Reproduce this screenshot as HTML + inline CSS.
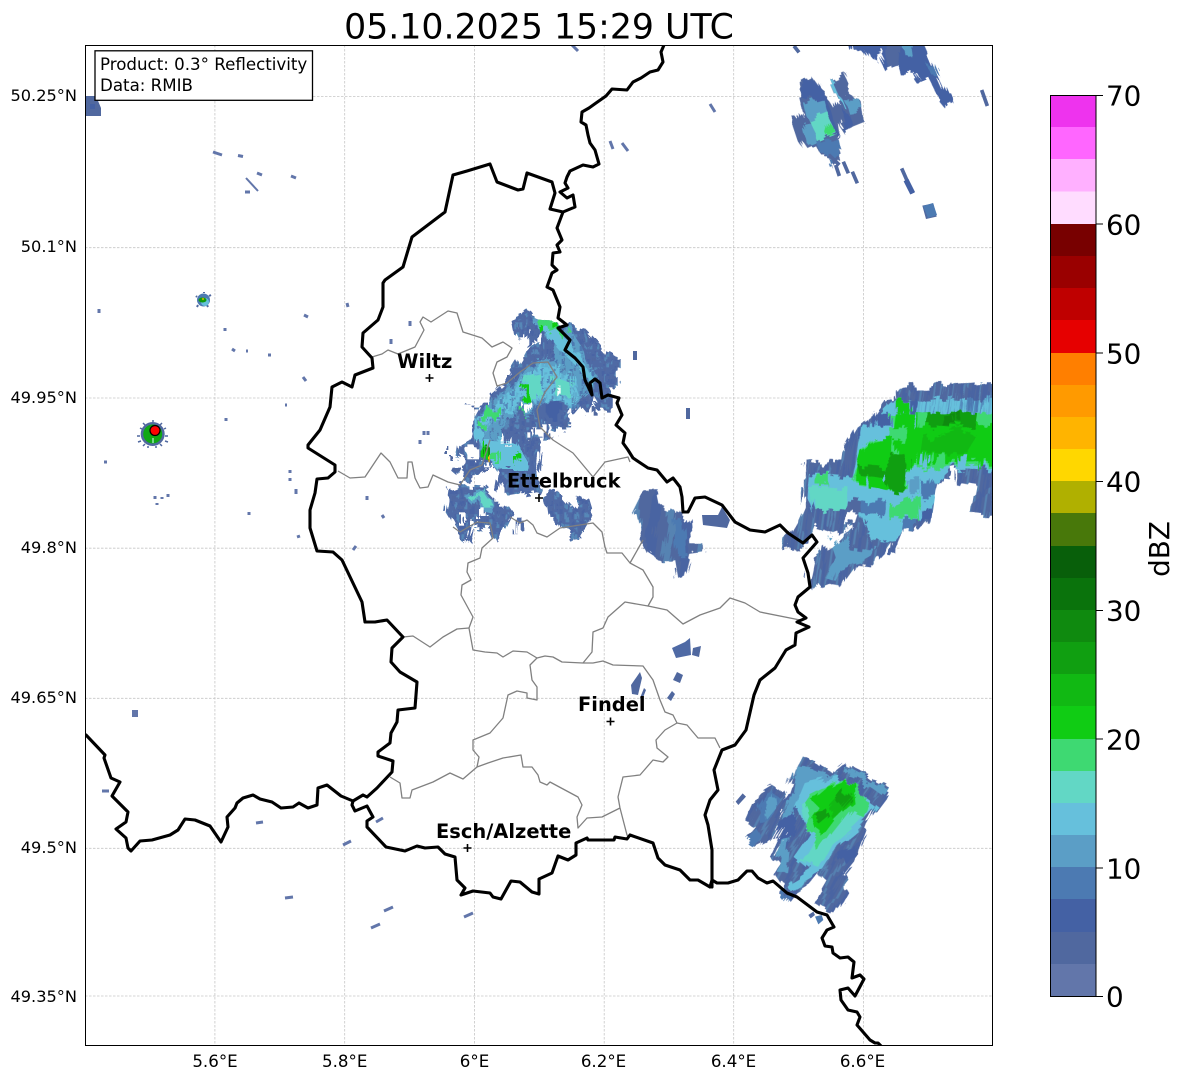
<!DOCTYPE html>
<html><head><meta charset="utf-8"><style>
html,body{margin:0;padding:0;background:#fff}
svg{display:block}
text{font-family:"DejaVu Sans",sans-serif;fill:#000}
</style></head><body>
<svg width="1184" height="1081" viewBox="0 0 1184 1081" xmlns="http://www.w3.org/2000/svg">
<defs>
<clipPath id="ax"><rect x="85.5" y="45.5" width="907" height="1000"/></clipPath>
<pattern id="st2" width="34" height="60" patternUnits="userSpaceOnUse" patternTransform="rotate(8)">
<rect x="2" width="9" height="60" fill="#4461a4" opacity=".55"/><rect x="20" width="6" height="60" fill="#5b9ec6" opacity=".5"/></pattern>
<pattern id="st3" width="36" height="60" patternUnits="userSpaceOnUse" patternTransform="rotate(28)">
<rect x="4" width="10" height="60" fill="#4461a4" opacity=".55"/><rect x="22" width="7" height="60" fill="#5b9ec6" opacity=".45"/></pattern>
<pattern id="st4" width="30" height="30" patternUnits="userSpaceOnUse">
<rect x="2" y="0" width="9" height="15" fill="#4461a4" opacity=".6"/><rect x="16" y="10" width="9" height="15" fill="#5b9ec6" opacity=".55"/><rect x="8" y="20" width="6" height="10" fill="#50689f" opacity=".6"/></pattern>
<filter id="fE" x="-15%" y="-15%" width="130%" height="130%" color-interpolation-filters="sRGB">
<feTurbulence type="fractalNoise" baseFrequency="0.13 0.035" numOctaves="1" seed="3"/>
<feComponentTransfer result="d"><feFuncR type="discrete" tableValues="0 .15 .3 .45 .55 .7 .85 1"/><feFuncG type="discrete" tableValues="0 .15 .3 .45 .55 .7 .85 1"/><feFuncA type="discrete" tableValues="1"/></feComponentTransfer>
<feDisplacementMap in="SourceGraphic" in2="d" scale="20" xChannelSelector="R" yChannelSelector="G"/>
</filter>
<filter id="fC" x="-15%" y="-15%" width="130%" height="130%" color-interpolation-filters="sRGB">
<feTurbulence type="fractalNoise" baseFrequency="0.12 0.07" numOctaves="1" seed="8"/>
<feComponentTransfer result="d"><feFuncR type="discrete" tableValues="0 .15 .3 .45 .55 .7 .85 1"/><feFuncG type="discrete" tableValues="0 .15 .3 .45 .55 .7 .85 1"/><feFuncA type="discrete" tableValues="1"/></feComponentTransfer>
<feDisplacementMap in="SourceGraphic" in2="d" scale="20" xChannelSelector="R" yChannelSelector="G"/>
</filter>
<filter id="fS" x="-20%" y="-20%" width="140%" height="140%" color-interpolation-filters="sRGB">
<feTurbulence type="fractalNoise" baseFrequency="0.13 0.04" numOctaves="1" seed="5"/>
<feComponentTransfer result="d"><feFuncR type="discrete" tableValues="0 .15 .3 .45 .55 .7 .85 1"/><feFuncG type="discrete" tableValues="0 .15 .3 .45 .55 .7 .85 1"/><feFuncA type="discrete" tableValues="1"/></feComponentTransfer>
<feDisplacementMap in="SourceGraphic" in2="d" scale="16" xChannelSelector="R" yChannelSelector="G"/>
</filter>
</defs>

<text x="539" y="38.5" font-size="34.72" text-anchor="middle">05.10.2025 15:29 UTC</text>

<g clip-path="url(#ax)">
<!-- grid -->
<g stroke="#c6c6c6" stroke-width=".8" stroke-dasharray="2.5 1.5" fill="none">
<path d="M214.9,45V1046M344.7,45V1046M474.5,45V1046M604.2,45V1046M733.7,45V1046M863.4,45V1046"/>
<path d="M85,96.5H993M85,247.7H993M85,398H993M85,548.2H993M85,698.3H993M85,848.3H993M85,996H993"/>
</g>

<!-- East storm -->
<g transform="rotate(8 900 480)"><g filter="url(#fE)"><g transform="rotate(-8 900 480)">
<g transform="translate(780 370) scale(.33333)">
<polygon fill="#50689f" points="345,55 380,50 410,50 440,50 510,45 570,42 600,40 680,38 680,435 575,430 590,345 535,335 530,295 510,340 470,335 460,375 450,415 440,455 410,490 365,480 350,515 348,560 330,560 335,520 310,555 280,590 240,585 215,610 190,645 160,640 110,660 90,635 105,560 155,530 185,500 215,470 160,490 100,470 75,530 12,540 15,510 40,480 60,445 75,410 75,280 185,280 190,245 210,210 230,175 285,135 315,95 345,90"/>
<polygon fill="url(#st2)" points="345,55 380,50 410,50 440,50 510,45 570,42 600,40 680,38 680,435 575,430 590,345 535,335 530,295 510,340 470,335 460,375 450,415 440,455 410,490 365,480 350,515 348,560 330,560 335,520 310,555 280,590 240,585 215,610 190,645 160,640 110,660 90,635 105,560 155,530 185,500 215,470 160,490 100,470 75,530 12,540 15,510 40,480 60,445 75,410 75,280 185,280 190,245 210,210 230,175 285,135 315,95 345,90"/>
<polygon fill="#5b9ec6" points="145,500 185,505 215,530 285,540 275,560 240,580 190,590 170,630 140,620 165,560"/>
<polygon fill="#66c0dc" points="340,95 680,85 680,300 520,290 465,340 450,400 415,450 360,470 345,510 300,515 260,490 235,430 195,390 190,420 95,420 85,390 90,310 215,320 240,210 300,135"/>
<polygon fill="url(#st2)" points="345,95 680,85 680,135 345,135"/>
<polygon fill="#50689f" points="195,390 235,395 300,405 300,435 240,430 200,425"/>
<polygon fill="#66c0dc" points="265,440 340,450 320,515 260,490"/>
<polygon fill="#62d7c5" points="90,350 190,350 190,420 95,420"/>
<polygon fill="#3ed972" points="335,135 680,130 680,280 490,290 385,300 380,360 230,350 215,320 230,290 240,245 280,210 340,175"/>
<polygon fill="#3ed972" points="340,405 410,380 415,450 340,440"/>
<polygon fill="#3ed972" points="115,315 140,315 140,345 115,345"/>
<polygon fill="#10cc14" points="350,95 385,95 385,130 350,130"/>
<polygon fill="#10cc14" points="340,170 345,130 400,130 440,130 560,130 600,170 680,170 680,275 480,280 385,290 375,360 330,365 230,345 230,285 240,250 280,215 335,205"/>
<polygon fill="#109f11" points="440,130 580,130 585,175 530,175 480,170 440,170"/>
<polygon fill="#11b913" points="430,210 540,180 590,200 560,250 430,245"/>
<polygon fill="#109f11" points="235,285 310,290 345,250 385,250 380,325 370,365 325,360 310,320 240,315"/>
<polygon fill="#0f8a0f" points="490,135 535,135 535,170 490,170"/>
<rect x="403" y="130" width="8" height="45" fill="#66c0dc"/><rect x="415" y="130" width="30" height="40" fill="#3ed972"/><rect x="345" y="215" width="10" height="35" fill="#3ed972"/><rect x="400" y="250" width="8" height="40" fill="#3ed972"/><rect x="425" y="250" width="14" height="40" fill="#66c0dc"/><rect x="450" y="250" width="8" height="40" fill="#3ed972"/><rect x="475" y="250" width="18" height="38" fill="#3ed972"/><rect x="530" y="255" width="30" height="42" fill="#66c0dc"/><rect x="598" y="250" width="8" height="50" fill="#10cc14"/><rect x="620" y="130" width="60" height="40" fill="#3ed972"/><rect x="575" y="88" width="15" height="40" fill="#4c7ab2"/><rect x="388" y="90" width="22" height="40" fill="#4461a4"/><rect x="255" y="320" width="8" height="40" fill="#66c0dc"/><rect x="305" y="290" width="8" height="45" fill="#66c0dc"/><rect x="380" y="295" width="40" height="32" fill="#66c0dc"/><rect x="420" y="330" width="40" height="45" fill="#4c7ab2"/><rect x="385" y="330" width="30" height="40" fill="#5b9ec6"/><rect x="245" y="395" width="60" height="38" fill="#4c7ab2"/><rect x="425" y="410" width="20" height="40" fill="#4461a4"/><rect x="365" y="450" width="45" height="38" fill="#4c7ab2"/><rect x="290" y="130" width="45" height="40" fill="#4461a4"/><rect x="230" y="175" width="110" height="35" fill="#66c0dc"/>
<rect x="330" y="175" width="55" height="35" fill="#3ed972"/>
<rect x="230" y="175" width="12" height="35" fill="#4461a4"/>
<polygon fill="#fff" points="200,430 230,430 220,460 195,460"/>
<polygon fill="#fff" points="510,300 535,295 535,335 515,340"/>
<polygon fill="#fff" points="165,490 215,470 185,500 155,530 130,530"/>
</g></g></g></g>

<!-- SE storm -->
<g transform="rotate(37 815 835)"><g filter="url(#fS)"><g transform="rotate(-37 815 835)">
<g transform="translate(720 740) scale(.33333)">
<polygon fill="#50689f" points="245,50 270,60 345,100 380,72 510,140 495,170 465,210 445,245 415,325 410,350 370,400 385,425 365,440 380,465 345,525 330,520 280,490 315,430 295,400 270,430 220,460 205,480 170,460 190,445 160,400 175,375 150,345 175,290 150,295 110,315 80,290 105,260 75,245 115,155 155,130 185,150 195,180 225,85"/>
<polygon fill="url(#st3)" points="245,50 270,60 345,100 380,72 510,140 495,170 465,210 445,245 415,325 410,350 370,400 385,425 365,440 380,465 345,525 330,520 280,490 315,430 295,400 270,430 220,460 205,480 170,460 190,445 160,400 175,375 150,345 175,290 150,295 110,315 80,290 105,260 75,245 115,155 155,130 185,150 195,180 225,85"/>
<polygon fill="#4c7ab2" points="130,165 160,150 175,185 150,240 120,245 110,200"/>
<polygon fill="#5b9ec6" points="130,190 160,170 165,205 140,235"/>
<polygon fill="#4c7ab2" points="80,300 110,270 120,290 105,315"/>
<polygon fill="#4c7ab2" points="170,450 190,445 208,470 195,483"/>
<polygon fill="#5b9ec6" points="225,85 285,90 345,110 300,150 225,190 200,400 170,400"/>
<polygon fill="#66c0dc" points="250,130 345,110 470,200 410,270 350,320 310,385 280,395 225,350 265,290 255,260 225,190"/>
<polygon fill="#66c0dc" points="300,370 300,395 215,445 205,425"/>
<polygon fill="#62d7c5" points="240,185 330,130 400,140 455,205 400,260 330,320 295,385 245,360 285,290 250,240"/>
<polygon fill="#5b9ec6" points="380,80 505,145 490,165 440,130 385,105"/>
<polygon fill="#3ed972" points="260,165 330,130 370,115 410,140 450,200 440,235 395,210 340,280 300,340 290,320 285,290 255,265 270,230 250,180"/>
<polygon fill="#10cc14" points="285,170 320,140 370,120 400,135 405,180 370,210 340,240 310,280 285,265 275,235 295,205 265,175"/>
<polygon fill="#11b913" points="330,195 370,150 400,175 360,220 340,235"/>
<polygon fill="#109f11" points="350,170 370,150 395,175 370,200"/>
<polygon fill="#109f11" points="280,230 320,200 330,225 300,250"/>
<polygon fill="#4461a4" points="355,340 410,320 405,350 365,375"/>
<polygon fill="#4461a4" points="190,240 230,230 220,290 170,300"/>
<path d="M160,300L185,255M195,210L185,230M175,345L195,300M210,265L195,285" stroke="#fff" stroke-width="3"/>
<polygon fill="#fff" points="295,405 320,425 300,460 275,470 270,432"/>
</g></g></g></g>
<g transform="translate(720 740) scale(.33333)">
<polygon fill="#50689f" points="47,185 68,160 78,170 55,195"/>
<polygon fill="#4c7ab2" points="285,530 305,525 310,540 295,553"/>
<polygon fill="#50689f" points="265,525 280,515 285,525 272,535"/>
</g>

<!-- North storms -->
<g transform="rotate(-22 850 110)"><g filter="url(#fS)"><g transform="rotate(22 850 110)">
<g transform="translate(760 45) scale(.33333)">
<polygon fill="#50689f" points="115,110 155,90 180,125 205,145 230,185 240,165 225,130 215,105 260,85 275,115 265,150 300,170 310,235 285,245 255,260 235,230 240,265 222,280 235,315 240,350 225,360 205,330 185,330 170,300 135,315 115,285 90,210 110,205 125,225 135,210 120,150"/>
<polygon fill="#4461a4" points="120,110 155,95 178,125 205,155 225,230 240,265 222,275 200,200 160,170 130,160"/>
<polygon fill="#5b9ec6" points="135,180 190,165 200,205 145,225"/>
<polygon fill="#5b9ec6" points="125,240 150,235 175,290 140,305"/>
<polygon fill="#4c7ab2" points="170,290 225,280 235,330 215,355 205,325 185,325"/>
<polygon fill="#62d7c5" points="145,225 195,205 225,265 175,290"/>
<polygon fill="#3ed972" points="205,245 220,265 195,278"/>
<polygon fill="#66c0dc" points="215,105 225,105 260,185 250,185"/>
<polygon fill="#5b9ec6" points="260,165 295,165 305,195 270,200"/>
<polygon fill="#4461a4" points="235,190 270,205 285,240 255,258"/>
<polygon fill="#4461a4" points="265,-40 480,-40 500,10 535,90 570,170 555,182 525,145 505,105 480,115 460,85 430,85 420,50 385,62 380,70 360,50 335,40 310,10 280,20"/>
<polygon fill="#50689f" points="375,-40 425,-40 420,50 385,62"/>
<polygon fill="#5b9ec6" points="420,-40 450,-40 460,30 435,35"/>
<polygon fill="#4c7ab2" points="495,50 520,55 535,90 515,90"/>
<polygon fill="#fff" points="355,30 362,28 385,75 375,78"/>
<polygon fill="#fff" points="455,85 462,85 480,120 472,120"/>
</g></g></g></g>
<g transform="translate(760 45) scale(.33333)">
<path d="M207,330L238,360M227,360L238,393M250,350L265,385M277,380L292,415M425,370L458,445M665,135L682,183M102,3L117,22" stroke="#50689f" stroke-width="11" fill="none"/>
<path d="M438,405L458,445" stroke="#4461a4" stroke-width="16"/>
<polygon fill="#50689f" points="487,482 520,475 530,515 498,522"/>
</g>

<!-- Central storm -->
<g filter="url(#fC)">
<g transform="translate(440 300) scale(.33333)">
<polygon fill="#4f6aa5" points="218,60 240,50 250,30 262,22 280,50 300,55 350,60 385,72 440,90 465,115 495,150 530,170 530,265 495,265 515,300 515,335 485,335 465,300 440,345 420,320 395,350 390,385 360,385 320,370 335,410 295,410 305,450 300,510 305,540 290,575 200,590 175,550 180,520 160,490 125,520 75,540 45,515 75,480 50,470 55,440 100,415 90,380 120,325 85,325 90,320 140,320 150,285 200,240 240,175 270,150 300,120 250,150 225,100"/>
<polygon fill="url(#st4)" points="218,60 240,50 250,30 262,22 280,50 300,55 350,60 385,72 440,90 465,115 495,150 530,170 530,265 495,265 515,300 515,335 485,335 465,300 440,345 420,320 395,350 390,385 360,385 320,370 335,410 295,410 305,450 300,510 305,540 290,575 200,590 175,550 180,520 160,490 125,520 75,540 45,515 75,480 50,470 55,440 100,415 90,380 120,325 85,325 90,320 140,320 150,285 200,240 240,175 270,150 300,120 250,150 225,100"/>
<polygon fill="#5b9ec6" points="265,50 350,65 400,100 445,170 480,240 440,280 380,330 300,340 220,340 180,400 220,500 170,500 110,440 100,380 150,300 210,250 270,190 330,180 350,130 310,100"/>
<polygon fill="url(#st4)" points="265,50 350,65 400,100 445,170 480,240 440,280 380,330 300,340 220,340 180,400 220,500 170,500 110,440 100,380 150,300 210,250 270,190 330,180 350,130 310,100"/>
<polygon fill="#66c0dc" points="280,70 350,80 380,120 400,150 440,200 465,250 450,260 420,210 380,170 345,130 320,110"/>
<polygon fill="#66c0dc" points="250,230 310,190 340,200 400,230 420,290 380,320 330,300 290,320 260,305 230,330 180,350 160,360 130,400 110,390 125,350 160,310 200,280"/>
<polygon fill="#66c0dc" points="100,360 130,350 130,420 160,420 230,430 265,490 260,510 190,510 150,480 125,440 105,410"/>
<polygon fill="url(#st4)" points="250,230 310,190 340,200 400,230 420,290 380,320 330,300 290,320 260,305 230,330 180,350 160,360 130,400 110,390 125,350 160,310 200,280"/>
<polygon fill="#62d7c5" points="260,230 300,220 300,300 260,300"/>
<polygon fill="#62d7c5" points="340,230 400,250 405,285 350,280"/>
<polygon fill="#4f6aa5" points="280,330 330,305 370,320 360,375 310,375"/>
<polygon fill="#4461a4" points="320,310 355,305 355,355 320,350"/>
<polygon fill="#3ed972" points="290,70 300,55 350,60 385,110 370,115 340,85 305,95"/>
<polygon fill="#10cc14" points="288,78 312,78 312,95 288,95"/>
<polygon fill="#10cc14" points="340,65 355,65 355,80 340,80"/>
<rect x="135" y="325" width="45" height="28" fill="#3ed972"/>
<rect x="248" y="250" width="16" height="55" fill="#10cc14"/>
<rect x="248" y="330" width="8" height="15" fill="#3ed972"/>
<rect x="125" y="425" width="10" height="55" fill="#10cc14"/>
<rect x="132" y="445" width="6" height="40" fill="#0f8a0f"/>
<rect x="138" y="460" width="8" height="30" fill="#ffb400"/>
<rect x="146" y="455" width="34" height="25" fill="#3ed972"/>
<rect x="222" y="465" width="10" height="22" fill="#10cc14"/>
<rect x="125" y="365" width="12" height="25" fill="#3ed972"/>
<g fill="#fff"><rect x="280" y="100" width="20" height="30"/><rect x="235" y="115" width="30" height="35"/><rect x="85" y="445" width="30" height="30"/><rect x="265" y="385" width="18" height="25"/><rect x="288" y="385" width="20" height="22"/><rect x="355" y="260" width="10" height="18"/><rect x="185" y="410" width="18" height="18"/><rect x="255" y="310" width="10" height="25"/><rect x="385" y="322" width="12" height="22"/><rect x="305" y="490" width="8" height="15"/><rect x="120" y="490" width="20" height="15"/></g>
<g fill="#50689f"><rect x="10" y="450" width="8" height="15"/><rect x="15" y="435" width="7" height="12"/><rect x="28" y="468" width="8" height="12"/><rect x="45" y="500" width="25" height="15"/><rect x="198" y="222" width="12" height="15"/><rect x="335" y="388" width="8" height="18"/><rect x="370" y="365" width="10" height="20"/><rect x="440" y="320" width="10" height="20"/><rect x="458" y="315" width="12" height="20"/></g>
<!-- lower-left -->
<polygon fill="#4f6aa5" points="30,570 70,555 130,560 160,590 200,610 220,640 190,700 170,725 155,690 100,680 90,735 50,690 20,640"/>
<polygon fill="url(#st4)" points="30,570 70,555 130,560 160,590 200,610 220,640 190,700 170,725 155,690 100,680 90,735 50,690 20,640"/>
<polygon fill="#5b9ec6" points="75,585 130,565 175,620 165,640 120,630"/>
<polygon fill="#62d7c5" points="95,590 130,570 165,620 130,620"/>
<g fill="#fff"><rect x="60" y="640" width="14" height="25"/><rect x="120" y="625" width="14" height="20"/><rect x="175" y="590" width="14" height="18"/><rect x="95" y="660" width="20" height="18"/></g>
<rect x="230" y="665" width="20" height="35" fill="#4f6aa5"/>
<!-- below Ettelbruck -->
<polygon fill="#4f6aa5" points="320,590 350,575 400,630 420,590 445,600 460,650 430,700 410,720 385,690 330,660"/>
<polygon fill="url(#st4)" points="320,590 350,575 400,630 420,590 445,600 460,650 430,700 410,720 385,690 330,660"/>
</g></g>

<!-- Blob near 6.3E and Findel patches -->
<g transform="rotate(14 670 535)"><g filter="url(#fS)"><g transform="rotate(-14 670 535)">
<polygon fill="#50689f" points="646,490 657,490 660,505 672,510 690,520 692,545 705,545 705,553 690,555 685,575 675,578 672,560 660,560 645,550 640,540 635,512"/>
<polygon fill="url(#st2)" points="646,490 657,490 660,505 672,510 690,520 692,545 705,545 705,553 690,555 685,575 675,578 672,560 660,560 645,550 640,540 635,512"/>
<polygon fill="#4c7ab2" points="672,520 685,522 687,555 675,555"/>
</g></g></g>
<g>
<polygon fill="#50689f" points="702,515 718,515 722,507 730,520 727,528 703,525"/>
<polygon fill="#4f6aa5" points="672,648 685,642 690,638 691,655 676,658"/>
<polygon fill="#50689f" points="693,648 701,646 699,657 692,655"/>
<polygon fill="#50689f" points="631,685 640,672 642,678 638,695 632,694"/>
<polygon fill="#50689f" points="673,680 677,672 683,675 680,683"/>
<polygon fill="#50689f" points="667,698 672,691 675,694 671,701"/>
<polygon fill="#50689f" points="640,698 644,688 646,690 642,700"/>
<polygon fill="#50689f" points="85,96 96,96 101,108 101,116 85,116"/>
<rect x="90" y="104" width="5" height="5" fill="#4461a4"/>
<rect x="132" y="710" width="6" height="7" fill="#6276aa"/>
<polygon fill="#4c7ab2" points="923,206 933,203 937,215 928,218"/>
</g>

<!-- specks -->
<path fill="none" stroke="#6276aa" stroke-width="3" d="M213,152l9,3M238,155.500l5,1M257,173l5,2M291,176l5,2M245,192l5,0M99,309v4M347,303l1,4M304,315l4,2M225,328v3M232,349l3,2M246,351l2,0M268,355h3M303,377l3,4M285,405h2M226,418v3M104,462h3M290,470v3M290,478v3M296,489v5M249,512v3M297,537l3,-1M353,550l3,-4M155,496v3M162,497v2M168,494v3M157,503v2M102,791h7M256,823l7,-1M343,845l8,-4M285,898l8,-1M376,822l7,-4M384,911l9,-4M371,928l9,-4M464,917l9,-4M410,321v5M391,339v5M424,431v4M428,431v4M420,440v4M367,496v4M382,515l2,3M572,45l6,6M710,104l5,8M610,141l3,8M622,143l6,8"/>
<path fill="none" stroke="#6276aa" stroke-width="2" d="M246,178l12,13"/>
<path fill="none" stroke="#50689f" stroke-width="4" d="M635,351v9M688,408v11"/>
<path fill="none" stroke="#6276aa" stroke-width="2" d="M291,94h7"/>

<!-- radar echoes around site -->
<circle cx="152.700" cy="434" r="12" fill="#50689f"/>
<path stroke="#50689f" stroke-width="1.500" d="M140,436h-3M165,436h3M153,422v-2M145,425l-2,-2M160,425l2,-2M145,444l-2,2M160,444l2,2M148,446v2M156,446v2M142,429l-2,-1M164,429l2,-1M141,441l-3,1M165,441l3,1"/>
<circle cx="152.700" cy="434" r="9.500" fill="#10a814"/>
<rect x="152.500" y="438" width="1" height="5" fill="#dff"/>
<circle cx="203.500" cy="300" r="6.500" fill="#4c7ab2"/>
<path stroke="#50689f" stroke-width="2" d="M197,297l-1,-1M209,296l2,-1M198,305l-1,2M207,305l1,2M204,293v-1"/>
<circle cx="205" cy="302" r="4" fill="#66c0dc"/>
<ellipse cx="202.500" cy="300" rx="4" ry="2.500" fill="#0f9a0f"/>
<circle cx="203" cy="299" r="1.200" fill="#b0b000"/>
<circle cx="155" cy="430.500" r="5" fill="#f00" stroke="#000" stroke-width="1.200"/>

<!-- admin grey -->
<g fill="none" stroke="#808080" stroke-width="1.300" stroke-linejoin="round">
<path d="M372,357L382,354 388,350 398,354 415,347 424,330 420,322 423,317 431,322 448,311 457,313 463,332 482,338 492,347 503,342 512,348 507,357 497,362 493,373 497,386 507,383 520,372 533,363 548,362 557,377 545,392 537,410 540,427 553,440 573,453 593,477 605,462 628,457 630,462"/>
<path d="M338,471L350,478 365,477 381,453 390,462 398,478 407,478 408,462 412,462 415,478 420,488 428,487 433,475 448,482 460,485 470,470 482,465 490,440"/>
<path d="M453,527L460,532 477,522 490,523 492,532 493,538 482,548 480,558 468,563 467,572 471,580 462,585 461,595 473,617 469,628 473,650 485,652 497,653 503,657 513,651 527,652 537,658 545,656 553,657 562,662 583,663 593,663 603,661 613,665 643,666 653,680 660,700 665,712 673,715 677,723 687,725 698,738 715,738 720,748"/>
<path d="M510,517L520,523 527,520 533,525 537,533 547,537 560,528 593,523 602,532 605,547 607,553 622,553 630,563 643,570 653,587 653,597 648,606 667,610 683,624 700,615 720,608 730,598 745,603 760,612 800,620"/>
<path d="M403,637L413,636 430,647 443,637 457,629 469,628"/>
<path d="M583,663L592,652 593,632 603,628 608,617 625,602 648,606"/>
<path d="M630,563L643,540"/>
<path d="M537,658L530,665 532,680 537,687 537,700 527,698 527,693 517,691 508,695 503,718 490,733 473,740 473,750 479,757 477,767"/>
<path d="M677,723L665,730 656,740 657,748 668,757 663,762 653,760 640,775 623,777 618,797 620,808 627,835 629,837"/>
<path d="M620,808L602,817 587,818 578,828 577,817 582,805 578,797 550,782 547,785 540,782 538,775 532,767 523,767 521,755 503,758 488,763 477,767 463,779 450,773 433,782 412,790 410,798 402,798 400,783 390,777"/>
</g>

<!-- country borders -->
<g fill="none" stroke="#000" stroke-width="3.100" stroke-linejoin="round" stroke-linecap="round">
<path d="M664,45L661,52 663,62 658,70 650,72 641,78 633,82 627,90 612,89 606,96 596,103 589,108 582,112 581,122 586,125 588,135 590,143 595,150 597,157 599,164 593,167 583,165 570,171 567,177 565,183 568,188 560,192 567,198 573,195 575,207 563,212 557,228 562,240 557,245 560,252 553,253 552,265 557,270 552,273 547,287 553,290 560,307 558,318 567,325 558,328 570,340 565,350 575,358 583,367 585,380 592,395 590,383 595,379 600,383 602,398 608,395 619,398 617,403 622,415 616,425 625,433 623,443 628,450 633,458 648,468 657,470 667,482 673,478 680,487 682,497 683,512 688,512 695,498 705,497 722,505 735,522 750,530 765,532 780,525 788,533 803,543 812,535 817,542 803,558 808,573 810,587 798,597 795,605 798,612 806,618 797,622 809,627 796,633 795,645 786,650 775,668 760,680 754,695 746,730 735,745 722,750 714,770 718,790 710,800 705,815 708,825 712,850 712,887"/>
<path d="M563,212L550,209 555,193 552,182 527,173 523,189 518,190 497,182 490,164 467,171 453,175 445,212 412,237 403,267 385,280 383,283 383,307 378,320 363,333 362,347 372,358 373,368 355,375 352,387 342,382 332,387 330,407 320,430 308,445 308,448 335,465 335,472 328,478 317,479 315,493 310,510 310,528 317,551 333,552 342,560 362,602 365,622 375,622 387,620 403,637 392,648 391,662 400,672 417,682 415,708 398,710 397,722 391,733 390,743 378,752 378,756 393,761 392,772 377,788 367,797 363,795 353,801"/>
<path d="M86,735L105,755 104,758 111,778 120,782 112,796 128,812 126,822 116,829 126,838 128,848 131,851 140,841 152,840 170,835 178,830 185,819 195,820 210,826 221,842 228,827 227,817 235,808 237,803 243,798 253,795 260,799 272,802 281,808 293,807 299,803 308,808 317,805 318,788 327,785 341,796 353,801 352,805 355,811 367,806 373,817 367,821 367,827 386,847 405,851 417,846 425,848 438,847 445,854 455,857 457,880 465,888 461,895 473,891 490,893 493,897 501,899 511,881 520,882 532,892 539,894 539,879 552,873 558,856 568,860 576,855 576,843 587,838 588,840 614,840 615,837 627,839 630,835 653,843 658,858 665,865 680,870 690,880 698,880 710,887 712,880 717,883 728,883 738,880 747,871 752,871 758,878 767,883 773,881 787,893 797,897 817,912 827,915 834,927 827,930 822,938 825,946 832,947 833,953 840,958 848,957 854,962 852,978 860,975 864,979 855,996 848,988 840,990 841,1000 848,1010 857,1012 860,1017 857,1025 870,1040 875,1043 878,1043 881,1046"/>
</g>

<!-- city markers -->
<g stroke="#000" stroke-width="1.600" fill="none">
<path d="M425.500,378h8M429.500,374v8M535,498h8M539,494v8M606.500,721.500h8M610.500,717.500v8M463.500,848h8M467.500,844v8"/>
</g>
<g font-size="19.440" font-weight="700">
<text x="397" y="368">Wiltz</text>
<text x="507" y="487.500">Ettelbruck</text>
<text x="578" y="711">Findel</text>
<text x="436" y="838">Esch/Alzette</text>
</g>
<!-- legend box -->
<rect x="95" y="50.800" width="217.500" height="49.500" fill="#fff" stroke="#000" stroke-width="1.300"/>
<text x="100" y="70" font-size="16.670">Product: 0.3° Reflectivity</text>
<text x="100" y="91" font-size="16.670">Data: RMIB</text>
</g>

<rect x="85.500" y="45.500" width="907" height="1000" fill="none" stroke="#000" stroke-width="1"/>

<!-- tick labels -->
<g font-size="16.200" text-anchor="end">
<text x="77" y="101">50.25°N</text>
<text x="77" y="252">50.1°N</text>
<text x="77" y="403">49.95°N</text>
<text x="77" y="553">49.8°N</text>
<text x="77" y="703">49.65°N</text>
<text x="77" y="853">49.5°N</text>
<text x="77" y="1002">49.35°N</text>
</g>
<g font-size="16.670" text-anchor="middle">
<text x="215" y="1067">5.6°E</text>
<text x="344.700" y="1067">5.8°E</text>
<text x="474.500" y="1067">6°E</text>
<text x="603.500" y="1067">6.2°E</text>
<text x="733.500" y="1067">6.4°E</text>
<text x="862.500" y="1067">6.6°E</text>
</g>

<!-- colorbar -->
<g shape-rendering="crispEdges">
<rect x="1051" y="95.500" width="45" height="33" fill="#ee33ee"/>
<rect x="1051" y="127" width="45" height="33" fill="#ff66ff"/>
<rect x="1051" y="159" width="45" height="33" fill="#ffb0ff"/>
<rect x="1051" y="191.500" width="45" height="33" fill="#ffdcff"/>
<rect x="1051" y="224" width="45" height="33" fill="#780000"/>
<rect x="1051" y="256" width="45" height="33" fill="#9a0000"/>
<rect x="1051" y="288" width="45" height="33" fill="#bf0000"/>
<rect x="1051" y="320" width="45" height="33" fill="#e60000"/>
<rect x="1051" y="353" width="45" height="33" fill="#ff7f00"/>
<rect x="1051" y="385" width="45" height="33" fill="#ff9a00"/>
<rect x="1051" y="417" width="45" height="33" fill="#ffb400"/>
<rect x="1051" y="449" width="45" height="33" fill="#ffd700"/>
<rect x="1051" y="481" width="45" height="33" fill="#b0b000"/>
<rect x="1051" y="513" width="45" height="33" fill="#48780a"/>
<rect x="1051" y="546" width="45" height="33" fill="#085f0a"/>
<rect x="1051" y="578" width="45" height="33" fill="#0a730c"/>
<rect x="1051" y="610" width="45" height="33" fill="#0f8a0f"/>
<rect x="1051" y="642" width="45" height="33" fill="#109f11"/>
<rect x="1051" y="674" width="45" height="33" fill="#11b913"/>
<rect x="1051" y="706" width="45" height="33" fill="#10cc14"/>
<rect x="1051" y="739" width="45" height="33" fill="#3ed972"/>
<rect x="1051" y="771" width="45" height="33" fill="#62d7c5"/>
<rect x="1051" y="803" width="45" height="33" fill="#66c0dc"/>
<rect x="1051" y="835" width="45" height="33" fill="#5b9ec6"/>
<rect x="1051" y="867" width="45" height="33" fill="#4c7ab2"/>
<rect x="1051" y="899" width="45" height="33" fill="#4461a4"/>
<rect x="1051" y="932" width="45" height="33" fill="#50689f"/>
<rect x="1051" y="964" width="45" height="32" fill="#6276aa"/>
</g>
<rect x="1050.500" y="95.500" width="45.500" height="901" fill="none" stroke="#000" stroke-width="1"/>
<path d="M1096,95.500h7M1096,224h7M1096,353h7M1096,481.500h7M1096,610.500h7M1096,739h7M1096,868h7M1096,996.500h7" stroke="#000" stroke-width="1"/>
<g font-size="27.780">
<text x="1106" y="105.500">70</text>
<text x="1106" y="234.500">60</text>
<text x="1106" y="363.500">50</text>
<text x="1106" y="491.500">40</text>
<text x="1106" y="620.500">30</text>
<text x="1106" y="749.500">20</text>
<text x="1106" y="878.500">10</text>
<text x="1106" y="1006.500">0</text>
</g>
<text transform="translate(1169 549) rotate(-90)" font-size="27.780" text-anchor="middle">dBZ</text>
</svg>
</body></html>
